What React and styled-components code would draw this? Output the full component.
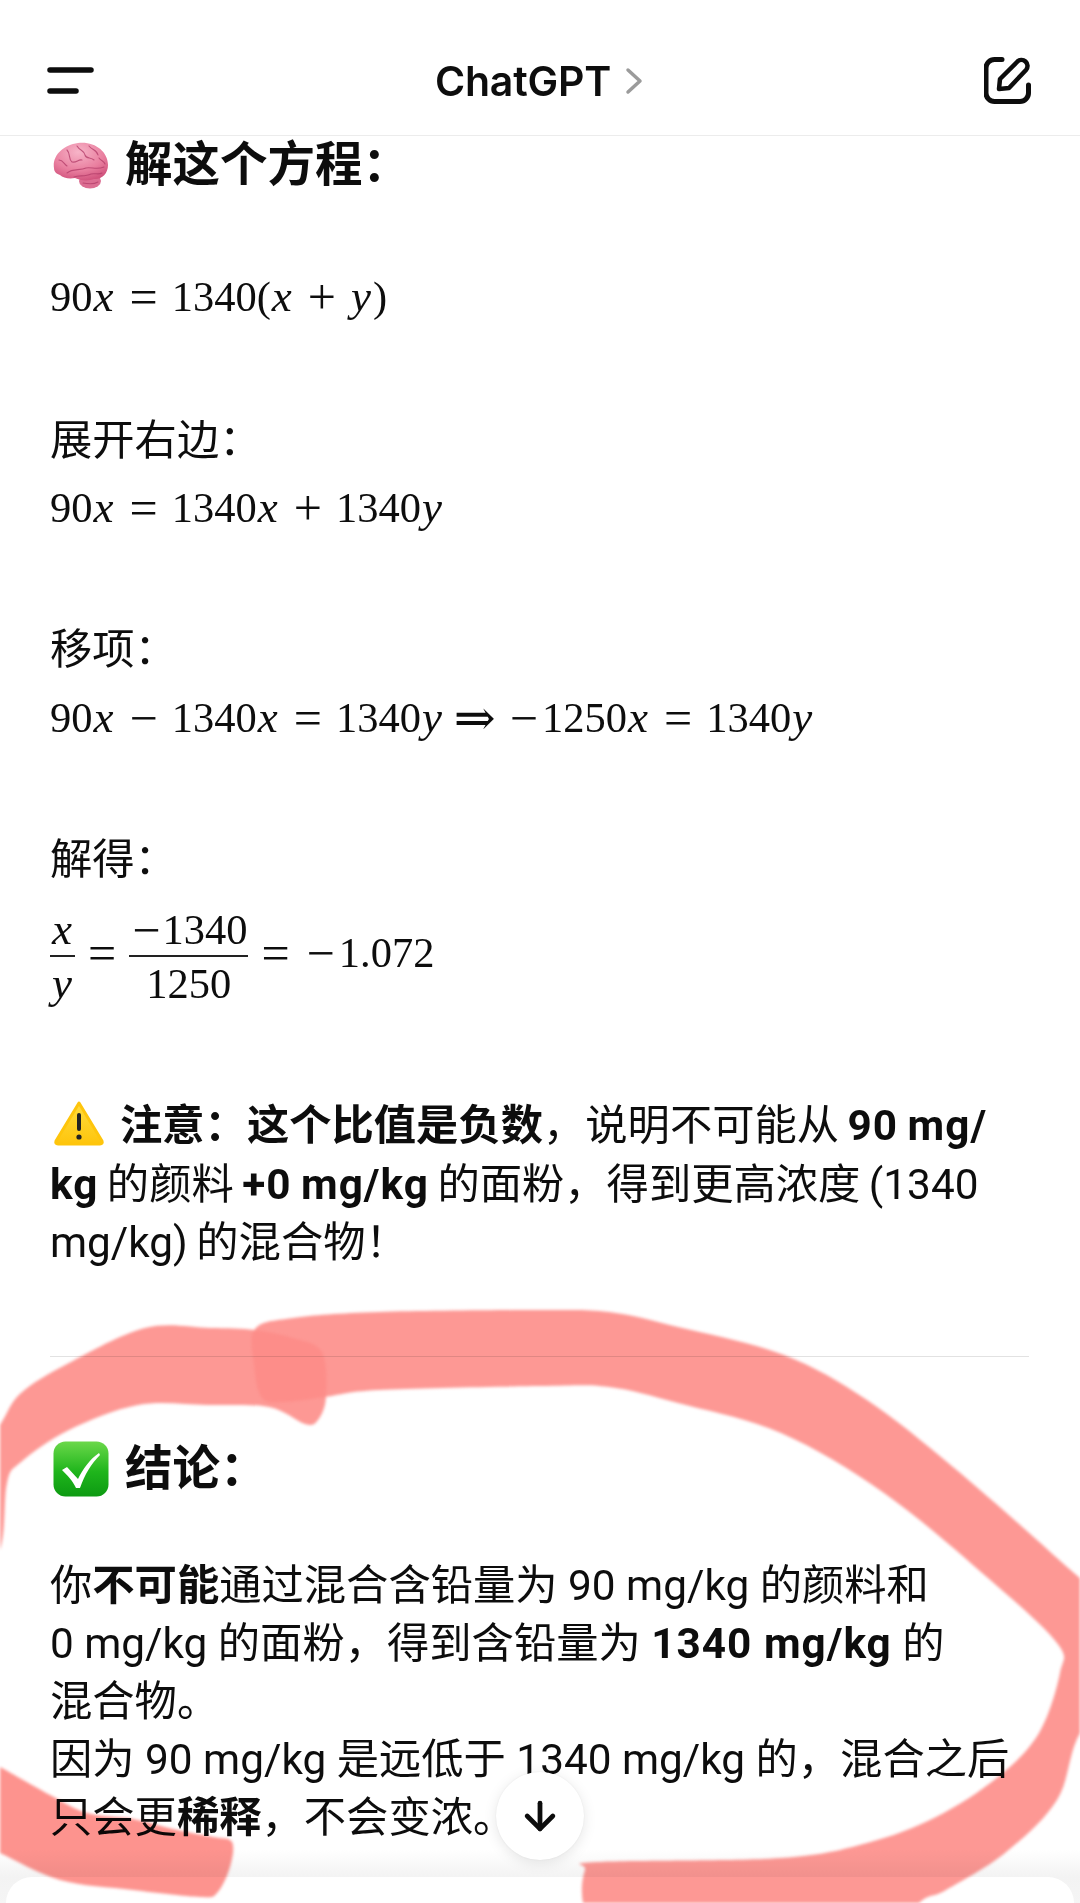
import React from 'react'
import styled, { createGlobalStyle } from 'styled-components'
import { ArrowDown } from 'lucide-react'

const GlobalStyle = createGlobalStyle`
  html, body { margin: 0; padding: 0; background: #fff; }
  * { box-sizing: border-box; }
`

const Page = styled.div`
  position: relative;
  width: 1080px;
  height: 1903px;
  overflow: hidden;
  display: flex;
  flex-direction: column;
  background: #fff;
  color: #0d0d0d;
  font-family: Roboto, "Noto Sans CJK SC", sans-serif;
  font-size: 42.3px;
  line-height: 58px;
`

const Header = styled.header`
  height: 136px;
  flex: none;
  display: flex;
  align-items: center;
  justify-content: space-between;
  padding: 26px 46px 0 47px;
  border-bottom: 1px solid #ececec;
`

const Title = styled.div`
  display: flex;
  align-items: center;
  gap: 14px;
  font-family: Inter, sans-serif;
  font-size: 41px;
  font-weight: 600;
  letter-spacing: -0.2px;
`

const Main = styled.main`
  flex: 1;
  padding: 0 51px 0 50px;
`

const Heading = styled.h2`
  display: flex;
  align-items: center;
  gap: 16px;
  height: 58px;
  margin: ${p => p.$top || 0}px 0 0;
  font-size: 47.5px;
  font-weight: 700;
  line-height: 58px;
  white-space: nowrap;
`

const Text = styled.p`
  margin: ${p => p.$top || 0}px 0 0;
  white-space: nowrap;
`

const Note = styled(Text)`
  line-height: 58.5px;
  word-spacing: -2px;
`

// latin bold runs in the reference are wider than Roboto's
const Wide = styled.b`
  letter-spacing: 1px;
`

const Equation = styled.div`
  height: ${p => p.$height || 58}px;
  margin-top: ${p => p.$top || 0}px;
  font-family: "Liberation Serif", "DejaVu Serif", serif;
  font-size: 42.5px;
  line-height: ${p => p.$height || 58}px;
  white-space: nowrap;
`

const V = styled.i`
  font-size: 45px;
  font-style: italic;
  line-height: 0;
  padding: 0 2px 0 1px;
`

const Op = styled.span`
  font-size: 50px;
  line-height: 0;
  vertical-align: -3px;
  margin: 0 ${p => p.$space ?? 14}px;
`

const Fraction = styled.span`
  display: inline-flex;
  flex-direction: column;
  align-items: center;
  vertical-align: middle;
  line-height: 44px;
`

const Numer = styled.span`
  padding: 0 1px 3px;
  border-bottom: 2px solid #222;
  width: 100%;
  text-align: center;
`

const Denom = styled.span`
  padding-top: 5px;
`

const Rule = styled.hr`
  height: 1px;
  margin: 83px 0 0;
  border: 0;
  background: #e2e2e2;
`

const Dock = styled.div`
  height: 53px;
  flex: none;
  display: flex;
  flex-direction: column;
  justify-content: flex-end;
  background: linear-gradient(#fff, #f3f3f3 27px, #f5f5f5);
`

const Composer = styled.div`
  height: 26px;
  margin: 0 6px;
  background: #fff;
  border-radius: 44px 44px 0 0;
`

const ScrollButton = styled.button`
  position: absolute;
  left: 496px;
  top: 1772px;
  width: 88px;
  height: 88px;
  display: flex;
  align-items: center;
  justify-content: center;
  padding: 0;
  border: 0;
  border-radius: 50%;
  background: #fff;
  color: #0d0d0d;
  box-shadow: 0 3px 14px rgba(0, 0, 0, 0.1), 0 0 2px rgba(0, 0, 0, 0.06);
`

const Marker = styled.svg`
  position: absolute;
  left: 0;
  top: 0;
  width: 1080px;
  height: 1903px;
  pointer-events: none;
  mix-blend-mode: multiply;
  filter: blur(1.6px);
`

const InlineEmoji = styled.svg`
  display: inline-block;
  vertical-align: -6px;
  margin: 0 15px 0 3px;
`

const BlockEmoji = styled.svg`
  flex: none;
  margin-left: 3px;
`

// catmull-rom through the traced edge points
const smooth = pts => {
  let d = `M${pts[0][0]} ${pts[0][1]}`
  for (let i = 0; i < pts.length; i++) {
    const p0 = pts[(i - 1 + pts.length) % pts.length]
    const p1 = pts[i]
    const p2 = pts[(i + 1) % pts.length]
    const p3 = pts[(i + 2) % pts.length]
    const c1 = [p1[0] + (p2[0] - p0[0]) / 6, p1[1] + (p2[1] - p0[1]) / 6]
    const c2 = [p2[0] - (p3[0] - p1[0]) / 6, p2[1] - (p3[1] - p1[1]) / 6]
    d += ` C${c1[0]} ${c1[1]} ${c2[0]} ${c2[1]} ${p2[0]} ${p2[1]}`
  }
  return d + 'Z'
}

const leftStroke = [
  [-30, 1470], [0, 1425], [21, 1393], [69, 1363], [145, 1328], [210, 1328], [255, 1330],
  [293, 1338], [322, 1352], [326, 1397], [318, 1420], [305, 1424], [269, 1407],
  [207, 1405], [138, 1405], [69, 1430], [21, 1462], [7, 1483], [0, 1550], [-30, 1600],
]

const ringStroke = [
  [255, 1329], [293, 1318], [379, 1312], [540, 1310], [609, 1312], [678, 1327], [784, 1355],
  [867, 1400], [953, 1467], [1057, 1558], [1110, 1610], [1130, 1670], [1080, 1733],
  [1057, 1800], [1005, 1853], [946, 1890], [919, 1903], [880, 1950], [600, 1950], [583, 1903], [585, 1870],
  [597, 1862], [781, 1858], [867, 1843], [936, 1817], [998, 1777], [1039, 1733], [1060, 1673],
  [1057, 1643], [988, 1578], [884, 1493], [781, 1433], [678, 1403], [609, 1387], [540, 1386],
  [379, 1390], [325, 1397], [285, 1402], [262, 1398], [254, 1365],
]

const tailStroke = [
  [-30, 1752], [0, 1767], [50, 1795], [87, 1813], [133, 1819], [177, 1830], [213, 1837], [232, 1842],
  [230, 1867], [217, 1893], [200, 1897], [133, 1890], [60, 1880], [0, 1853], [-30, 1840],
]

const MenuIcon = () => (
  <svg width="47" height="30" viewBox="0 0 47 30" fill="none" stroke="#0d0d0d" strokeWidth="5.5" strokeLinecap="round">
    <path d="M3 4H44" />
    <path d="M3 25H29" />
  </svg>
)

const ChevronIcon = () => (
  <svg width="18" height="30" viewBox="0 0 18 30" fill="none" stroke="#9b9b9b" strokeWidth="3.5" strokeLinecap="round" strokeLinejoin="round">
    <path d="M3 4L15 15L3 26" />
  </svg>
)

const EditIcon = () => (
  <svg width="50" height="50" viewBox="46 27 50 50" fill="none" stroke="#0d0d0d" strokeWidth="5" strokeLinecap="round" strokeLinejoin="round">
    <path d="M64 30.5H56.5a8.5 8.5 0 0 0-8.5 8.5V64a8.5 8.5 0 0 0 8.5 8.5H82a8.5 8.5 0 0 0 8.5-8.5V56" />
    <path d="M62 50L79 33a6 6 0 0 1 9 8L71 59L61 60Z" strokeWidth="4.5" />
  </svg>
)

const BrainEmoji = () => (
  <BlockEmoji width="56" height="47" viewBox="0 0 56 47" fill="none">
    <defs>
      <radialGradient id="brainFill" cx="0.45" cy="0.25" r="0.8">
        <stop offset="0" stopColor="#f7b4c8" />
        <stop offset="0.6" stopColor="#e97f9f" />
        <stop offset="1" stopColor="#cf4f7a" />
      </radialGradient>
    </defs>
    <ellipse cx="37" cy="39" rx="11" ry="7.5" fill="#dc6e92" />
    <path d="M1 26C-1 14 10 3 25 1C41-1 55 9 55 23C55 32 48 38 41 37C36 39 28 39 22 36C16 37 10 36 7 33C4 32 1 30 1 26Z" fill="url(#brainFill)" />
    <g stroke="#b53f6b" strokeWidth="1.1" strokeLinecap="round" opacity="0.8">
      <path d="M14 8C18 12 15 17 19 20C24 21 25 17 29 18" />
      <path d="M24 4C27 9 31 8 32 13C33 17 38 15 41 18" />
      <path d="M36 4C39 8 44 8 45 13" />
      <path d="M6 18C10 18 11 22 14 24" />
      <path d="M46 16C48 19 51 19 52 22" />
      <path d="M14 31C20 26 27 29 33 26C39 25 44 28 51 25" />
      <path d="M21 35C26 33 32 35 38 32C42 31 46 33 49 31" />
      <path d="M30 41C35 42 40 43 45 40" />
    </g>
  </BlockEmoji>
)

const CheckEmoji = () => (
  <BlockEmoji width="56" height="56" viewBox="0 0 56 56">
    <defs>
      <linearGradient id="checkFill" x1="0" y1="0" x2="0" y2="1">
        <stop offset="0" stopColor="#6bd84a" />
        <stop offset="0.55" stopColor="#1fb51c" />
        <stop offset="1" stopColor="#0d9a12" />
      </linearGradient>
    </defs>
    <rect x="0.5" y="0.5" width="55" height="55" rx="12" fill="url(#checkFill)" />
    <path d="M9 29L14 26L25 38C30 28 36 19 46 12L47 14C38 23 32 33 27 47H23C20 40 14 34 9 29Z" fill="#fff" />
  </BlockEmoji>
)

const WarningEmoji = () => (
  <InlineEmoji width="52" height="46" viewBox="0 0 52 46">
    <defs>
      <linearGradient id="warnFill" x1="0" y1="0" x2="0" y2="1">
        <stop offset="0" stopColor="#ffdc3f" />
        <stop offset="1" stopColor="#fec50c" />
      </linearGradient>
    </defs>
    <path d="M26 3L49 41Q50 44 47 44H5Q2 44 3 41Z" fill="url(#warnFill)" stroke="#fec50c" strokeWidth="3" strokeLinejoin="round" />
    <rect x="24" y="13" width="4" height="18" rx="2" fill="#222" />
    <circle cx="26" cy="37" r="2.6" fill="#222" />
  </InlineEmoji>
)

export default function App() {
  return (
    <Page>
      <GlobalStyle />
      <Header>
        <MenuIcon />
        <Title>ChatGPT <ChevronIcon /></Title>
        <EditIcon />
      </Header>

      <Main>
        <Heading><BrainEmoji />解这个方程：</Heading>

        <Equation $top={74}>
          90<V>x</V><Op>=</Op>1340(<V>x</V><Op>+</Op><V>y</V>)
        </Equation>

        <Text $top={86}>展开右边：</Text>
        <Equation $top={9}>
          90<V>x</V><Op>=</Op>1340<V>x</V><Op>+</Op>1340<V>y</V>
        </Equation>

        <Text $top={84}>移项：</Text>
        <Equation $top={10}>
          90<V>x</V><Op>−</Op>1340<V>x</V><Op>=</Op>1340<V>y</V><Op $space={10}>⇒</Op><Op $space={4}>−</Op>1250<V>x</V><Op>=</Op>1340<V>y</V>
        </Equation>

        <Text $top={84}>解得：</Text>
        <Equation $top={13} $height={102}>
          <Fraction>
            <Numer><V>x</V></Numer>
            <Denom><V>y</V></Denom>
          </Fraction>
          <Op $space={13}>=</Op>
          <Fraction>
            <Numer><Op $space={2}>−</Op>1340</Numer>
            <Denom>1250</Denom>
          </Fraction>
          <Op $space={13}>=</Op><Op $space={4}>−</Op>1.072
        </Equation>

        <Note $top={93}>
          <WarningEmoji /><b>注意：这个比值是负数</b>，说明不可能从 <Wide>90 mg/</Wide><br />
          <Wide>kg</Wide> 的颜料 <Wide>+0 mg/kg</Wide> 的面粉，得到更高浓度 (1340<br />
          mg/kg) 的混合物！
        </Note>

        <Rule />

        <Heading $top={83}><CheckEmoji />结论：</Heading>

        <Text $top={59}>
          你<b>不可能</b>通过混合含铅量为 90 mg/kg 的颜料和<br />
          0 mg/kg 的面粉，得到含铅量为 <Wide>1340 mg/kg</Wide> 的<br />
          混合物。<br />
          因为 90 mg/kg 是远低于 1340 mg/kg 的，混合之后<br />
          只会更<b>稀释</b>，不会变浓。
        </Text>
      </Main>

      <Dock><Composer /></Dock>

      <ScrollButton aria-label="Scroll to bottom">
        <ArrowDown size={44} strokeWidth={2.6} />
      </ScrollButton>

      <Marker viewBox="0 0 1080 1903">
        <path d={smooth(leftStroke)} fill="#fd8d88" fillOpacity="0.9" />
        <path d={smooth(ringStroke)} fill="#fd8d88" fillOpacity="0.9" />
        <path d={smooth(tailStroke)} fill="#fd8d88" fillOpacity="0.95" />
      </Marker>
    </Page>
  )
}
